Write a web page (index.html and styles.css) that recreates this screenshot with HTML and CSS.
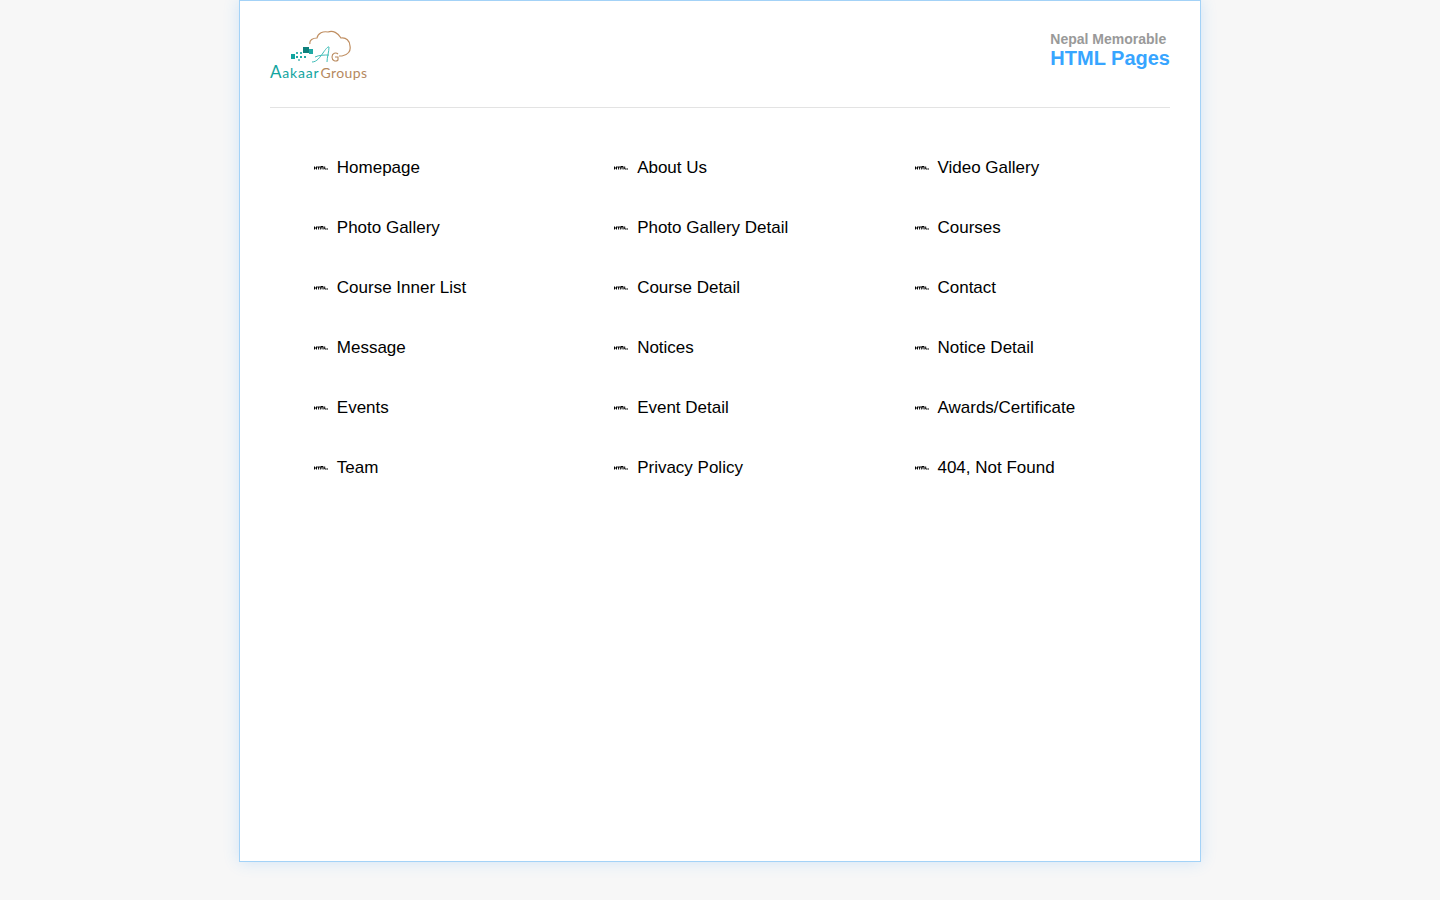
FILE: index.html
```html
<!DOCTYPE html>
<html lang="en">
<head>
    <meta charset="UTF-8">
    <meta name="viewport" content="width=device-width, initial-scale=1.0">
    <title>Nepal Memorable HTML Pages</title>
    <link rel="stylesheet" href="styles.css">
</head>
<body>

    <svg class="defs" width="0" height="0">
        <symbol id="html-icon" viewBox="0 0 14 4">
            <path d="M0.500 0.500v3M2.500 0.500v3M0.500 2h2M3.200 1h2.800M4.600 1v2.500M6.700 3.500v-3h2.400v3M7.900 0.500v2M10.700 0.500v2.500h2" fill="none" stroke="#000" stroke-width="1"/>
            <rect x="13" y="2.500" width="1" height="1" fill="#000"/>
        </symbol>
    </svg>

    <div class="container">
        <header class="header">
            <div class="logo">
                <svg class="logo-mark" width="100" height="35" viewBox="0 0 100 35">
                    <path d="M40 14C39 10 43 8 47 8C48 3 53 1 58 2C63 0 68 3 71 8C76 7 80 11 80 16C81 21 78 25 72 26L69 26" fill="none" stroke="#c08f62" stroke-width="1.200"/>
                    <rect x="33" y="17" width="6" height="6" fill="#0f807c"/>
                    <rect x="39" y="19" width="4" height="5" fill="#1fa9a4"/>
                    <rect x="21" y="24" width="4" height="5" fill="#12a5a0"/>
                    <rect x="26" y="22" width="2" height="2" fill="#3fb5b0"/>
                    <rect x="30" y="22" width="2" height="2" fill="#3fb5b0"/>
                    <rect x="26" y="26" width="2" height="2" fill="#23a8a3"/>
                    <rect x="30" y="26" width="2" height="2" fill="#23a8a3"/>
                    <rect x="34" y="26" width="2" height="2" fill="#23a8a3"/>
                    <rect x="28" y="29" width="2" height="2" fill="#7cc9c6"/>
                    <path d="M42 32C47 32 50 27 53 23C55 20 58 16 59 17C59 22 57 27 57 32M45 27C49 25 54 25 59 25" fill="none" stroke="#3fbdb8" stroke-width="1"/>
                    <path d="M68 24C66 22 62 23 62 27C62 31 66 32 68 30L68 27L65 27" fill="none" stroke="#b98a5e" stroke-width="1.100"/>
                </svg>
                <div class="logo-name"><span class="logo-a"><span class="logo-cap">A</span>akaar</span><span class="logo-g">Groups</span></div>
            </div>
            <div class="title">
                <span class="title-sub">Nepal Memorable</span>
                <span class="title-main">HTML Pages</span>
            </div>
        </header>

        <ul class="pages">
            <li><svg class="icon"><use href="#html-icon"/></svg> <a href="#">Homepage</a></li>
            <li><svg class="icon"><use href="#html-icon"/></svg> <a href="#">About Us</a></li>
            <li><svg class="icon"><use href="#html-icon"/></svg> <a href="#">Video Gallery</a></li>
            <li><svg class="icon"><use href="#html-icon"/></svg> <a href="#">Photo Gallery</a></li>
            <li><svg class="icon"><use href="#html-icon"/></svg> <a href="#">Photo Gallery Detail</a></li>
            <li><svg class="icon"><use href="#html-icon"/></svg> <a href="#">Courses</a></li>
            <li><svg class="icon"><use href="#html-icon"/></svg> <a href="#">Course Inner List</a></li>
            <li><svg class="icon"><use href="#html-icon"/></svg> <a href="#">Course Detail</a></li>
            <li><svg class="icon"><use href="#html-icon"/></svg> <a href="#">Contact</a></li>
            <li><svg class="icon"><use href="#html-icon"/></svg> <a href="#">Message</a></li>
            <li><svg class="icon"><use href="#html-icon"/></svg> <a href="#">Notices</a></li>
            <li><svg class="icon"><use href="#html-icon"/></svg> <a href="#">Notice Detail</a></li>
            <li><svg class="icon"><use href="#html-icon"/></svg> <a href="#">Events</a></li>
            <li><svg class="icon"><use href="#html-icon"/></svg> <a href="#">Event Detail</a></li>
            <li><svg class="icon"><use href="#html-icon"/></svg> <a href="#">Awards/Certificate</a></li>
            <li><svg class="icon"><use href="#html-icon"/></svg> <a href="#">Team</a></li>
            <li><svg class="icon"><use href="#html-icon"/></svg> <a href="#">Privacy Policy</a></li>
            <li><svg class="icon"><use href="#html-icon"/></svg> <a href="#">404, Not Found</a></li>
        </ul>
    </div>

</body>
</html>
```

FILE: styles.css
```css
html, body {
    margin: 0;
    padding: 0;
    height: 100%;
}

body {
    background-color: #f7f7f7;
    font-family: "Liberation Sans", Arial, sans-serif;
    overflow: hidden;
}

.defs {
    display: block;
    height: 0;
}

.container {
    box-sizing: border-box;
    width: 962px;
    height: 862px;
    margin: 0 auto;
    padding: 0 30px;
    background-color: #fff;
    border: 1px solid #a3d2f7;
    box-shadow: 0 0 15px rgba(51, 153, 255, 0.2);
}

.header {
    display: flex;
    justify-content: space-between;
    height: 106px;
    border-bottom: 1px solid #e3e3e3;
}

.logo {
    display: flex;
    flex-direction: column;
    width: 100px;
    padding-top: 29px;
}

.logo-name {
    margin-top: -2px;
    font-family: "Lato", sans-serif;
    font-size: 14px;
    letter-spacing: 0.8px;
    line-height: 18px;
    white-space: nowrap;
}

.logo-a {
    margin-right: 1px;
    color: #12a5a0;
}

.logo-cap {
    font-size: 17px;
}

.logo-g {
    color: #b5895f;
    font-size: 14px;
    letter-spacing: 0.4px;
}

.title {
    display: flex;
    flex-direction: column;
    padding-top: 30px;
}

.title-sub {
    color: #999;
    font-size: 14px;
    font-weight: bold;
    line-height: 17px;
}

.title-main {
    color: #37a5ff;
    font-size: 20px;
    font-weight: bold;
    line-height: 21px;
}

.pages {
    display: grid;
    grid-template-columns: repeat(3, 300.33px);
    grid-auto-rows: 60px;
    margin: 30px 0 0;
    padding: 0 0 0 44px;
    list-style: none;
}

.pages li {
    display: flex;
    align-items: center;
    gap: 8.8px;
    font-size: 17px;
}

.pages a {
    color: #000;
    text-decoration: none;
}

.icon {
    width: 14px;
    height: 4px;
}
```
